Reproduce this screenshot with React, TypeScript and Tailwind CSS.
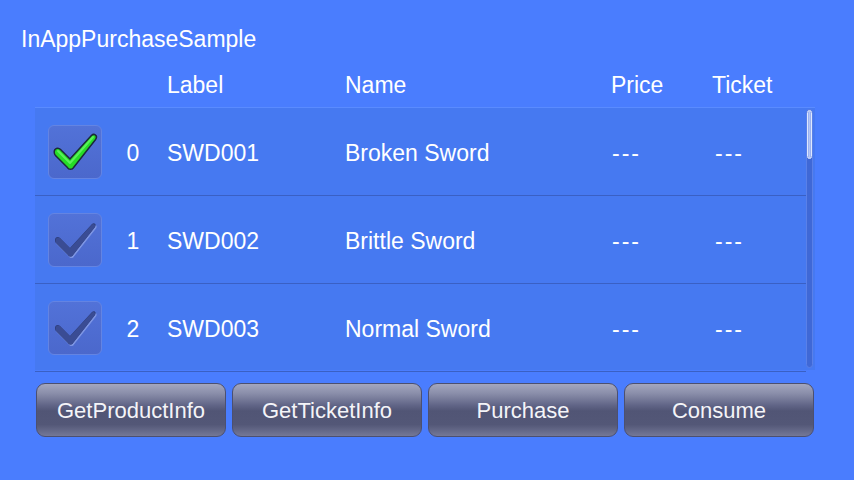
const items = [
  { idx: 0, label: 'SWD001', name: 'Broken Sword', on: true },
  { idx: 1, label: 'SWD002', name: 'Brittle Sword', on: false },
  { idx: 2, label: 'SWD003', name: 'Normal Sword', on: false },
];

const buttons = ['GetProductInfo', 'GetTicketInfo', 'Purchase', 'Consume'];

// tapered tick, drawn in the 52x52 box space
const tick = 'M6 26 C6 23 9 22 11 24 L21 34 L43 10 C45 8 48 10 46 13 L24 41 C23 43 20 43 19 41 L7 29 C6 28 6 27 6 26 Z';

function Check({ on }: { on: boolean }) {
  return (
    <div className="w-[54px] h-[54px] shrink-0 rounded-[6px] border border-[#6484e2] bg-gradient-to-b from-[#5272d8] to-[#4b68cc]">
      <svg width="52" height="52" viewBox="0 0 52 52">
        {on ? (
          <>
            <path d={tick} fill="#1f3a2c" stroke="#1a2a38" strokeWidth="3" strokeLinejoin="round" />
            <path d={tick} fill="#26dc26" />
            <path d="M9 25 L21 37 L44 11" fill="none" stroke="#7dff7d" strokeWidth="2" strokeLinecap="round" strokeLinejoin="round" opacity="0.6" />
          </>
        ) : (
          <>
            <path d={tick} fill="#7d95e4" transform="translate(1 1.5)" />
            <path d={tick} fill="#2c3c78" />
            <path d={tick} fill="#3a4c94" transform="translate(0.8 1.2) scale(0.97)" />
          </>
        )}
      </svg>
    </div>
  );
}

export default function App() {
  return (
    <div className="w-[854px] h-[480px] bg-[#4a7dfe] text-white overflow-hidden font-['Liberation_Sans',Arial,sans-serif]">
      {/* title */}
      <div className="pt-[26px] pl-[21px] h-[52px] text-[23px] leading-[26px]">InAppPurchaseSample</div>

      {/* column headers */}
      <div className="mt-[20px] h-[26px] flex text-[23px] leading-[26px]">
        <div className="w-[167px] shrink-0" />
        <div className="w-[178px] shrink-0">Label</div>
        <div className="w-[266px] shrink-0">Name</div>
        <div className="w-[101px] shrink-0">Price</div>
        <div>Ticket</div>
      </div>

      {/* list */}
      <div className="mt-[9px] ml-[35px] w-[780px] h-[263px] bg-[#4679f1] border-t border-[#5a8bff] flex">
        <div className="flex-1 flex flex-col">
          {items.map((it) => (
            <div key={it.idx} className="h-[88px] shrink-0 flex items-center pl-[13px] border-b border-[#3a60c4] text-[23px]">
              <Check on={it.on} />
              <div className="flex pt-[3px]">
                <div className="w-[62px] text-center">{it.idx}</div>
                <div className="w-[181px] pl-[3px]">{it.label}</div>
                <div className="w-[267px]">{it.name}</div>
                <div className="w-[103px] tracking-[2px]">---</div>
                <div className="tracking-[2px]">---</div>
              </div>
            </div>
          ))}
        </div>
        {/* scrollbar */}
        <div className="w-[9px] shrink-0 pt-[1px] pb-[2px] flex">
          <div className="w-[7px] h-full rounded-[4px] bg-[#3f68d6] border border-[#5a80e8] flex flex-col">
            <div className="h-[49px] rounded-[4px] bg-gradient-to-r from-[#8ea8ee] via-[#b4c6f6] to-[#8ea8ee] border border-[#dfe8ff]" />
          </div>
        </div>
      </div>

      {/* buttons */}
      <div className="mt-[13px] ml-[36px] flex gap-[6px]">
        {buttons.map((b) => (
          <div
            key={b}
            className="w-[190px] h-[54px] rounded-[9px] border border-[#4c5070] bg-[linear-gradient(to_bottom,#a4a7be_0%,#8a8eaa_18%,#5f6385_42%,#515575_52%,#535777_78%,#747897_100%)] flex items-center justify-center text-[22px] text-[#f4f4f8]"
          >
            {b}
          </div>
        ))}
      </div>
    </div>
  );
}
